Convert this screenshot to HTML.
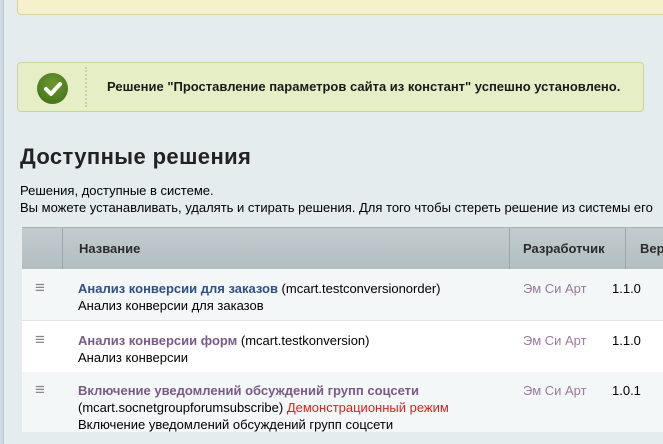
<!DOCTYPE html>
<html><head><meta charset="utf-8"><style>
*{margin:0;padding:0;box-sizing:border-box}
body{width:663px;height:444px;overflow:hidden;background:#e4ecee;font-family:"Liberation Sans",Arial,sans-serif;font-size:13px;color:#000;position:relative}
.lb{position:absolute;left:0;top:0;width:4px;height:444px;background:#cfdadf;border-right:1px solid #b8c8d0}
.yel{position:absolute;left:17px;top:-5px;width:660px;height:20px;background:#f4f1cc;border:1px solid #d6d39a;border-radius:4px}
.ok{position:absolute;left:17px;top:62px;width:627px;height:50px;background:#e6eec5;border:1px solid #c9d49c;border-radius:4px}
.ok .ic{position:absolute;left:19px;top:10px;width:31px;height:31px;border-radius:50%;background:radial-gradient(circle at 50% 35%,#6a9b2c,#3d6b17)}
.ok .sep{position:absolute;left:67px;top:4px;height:40px;border-left:2px dotted #c8d1a8}
.ok .t{position:absolute;left:89px;top:16px;font-weight:bold;font-size:13px;color:#1a1a1a;white-space:nowrap}
h1{position:absolute;left:20px;top:144px;font-size:22px;letter-spacing:0.4px;font-weight:bold;color:#222;white-space:nowrap}
.d{position:absolute;left:20px;top:182px;line-height:17px;font-size:13px;color:#000;white-space:nowrap}
.tb{position:absolute;left:22px;top:227px;width:660px}
.hd{height:42px;background:linear-gradient(#c2cccf,#b3bec2);border-top:1px solid #a9b4b8;position:relative;font-weight:bold}
.hd div{position:absolute;top:0;height:41px;line-height:41px;color:#2b2b2b}
.row{position:relative}
.row div{position:absolute;white-space:nowrap}
.m{left:13px;color:#888;font-size:17px;line-height:17px}
.n{left:56px;line-height:17px}
.n a{font-weight:bold;color:#7a5a86;text-decoration:none}
.dev{left:501px;color:#9a7a9e;line-height:17px}
.v{left:590px;line-height:17px}
</style></head><body>
<div class="lb"></div>
<div class="yel"></div>
<div class="ok"><div class="ic"><svg width="31" height="31"><path d="M9 16 L14 21 L23 11" stroke="#fff" stroke-width="4" fill="none" stroke-linecap="round" stroke-linejoin="round"/></svg></div><div class="sep"></div><div class="t">Решение "Проставление параметров сайта из констант" успешно установлено.</div></div>
<h1>Доступные решения</h1>
<div class="d">Решения, доступные в системе.<br>Вы можете устанавливать, удалять и стирать решения. Для того чтобы стереть решение из системы его</div>
<div class="tb">
<div class="hd"><div style="left:40px;width:447px;border-left:1px solid #9aa6aa;padding-left:16px">Название</div><div style="left:487px;width:116px;border-left:1px solid #9aa6aa;padding-left:13px">Разработчик</div><div style="left:603px;border-left:1px solid #9aa6aa;padding-left:14px">Вер</div></div>
<div class="row" style="height:52px;background:#f4f7f7;border-bottom:1px solid #e0e6e8"><div class="m" style="top:10px">≡</div><div class="n" style="top:11px"><a style="color:#2d4f8a">Анализ конверсии для заказов</a> (mcart.testconversionorder)<br>Анализ конверсии для заказов</div><div class="dev" style="top:11px">Эм Си Арт</div><div class="v" style="top:11px">1.1.0</div></div>
<div class="row" style="height:51px;background:#fff"><div class="m" style="top:10px">≡</div><div class="n" style="top:11px"><a>Анализ конверсии форм</a> (mcart.testkonversion)<br>Анализ конверсии</div><div class="dev" style="top:11px">Эм Си Арт</div><div class="v" style="top:11px">1.1.0</div></div>
<div class="row" style="height:60px;background:#f4f7f7"><div class="m" style="top:9px">≡</div><div class="n" style="top:10px"><a>Включение уведомлений обсуждений групп соцсети</a><br>(mcart.socnetgroupforumsubscribe) <span style="color:#e0201c">Демонстрационный режим</span><br>Включение уведомлений обсуждений групп соцсети</div><div class="dev" style="top:10px">Эм Си Арт</div><div class="v" style="top:10px">1.0.1</div></div>
</div>
</body></html>
